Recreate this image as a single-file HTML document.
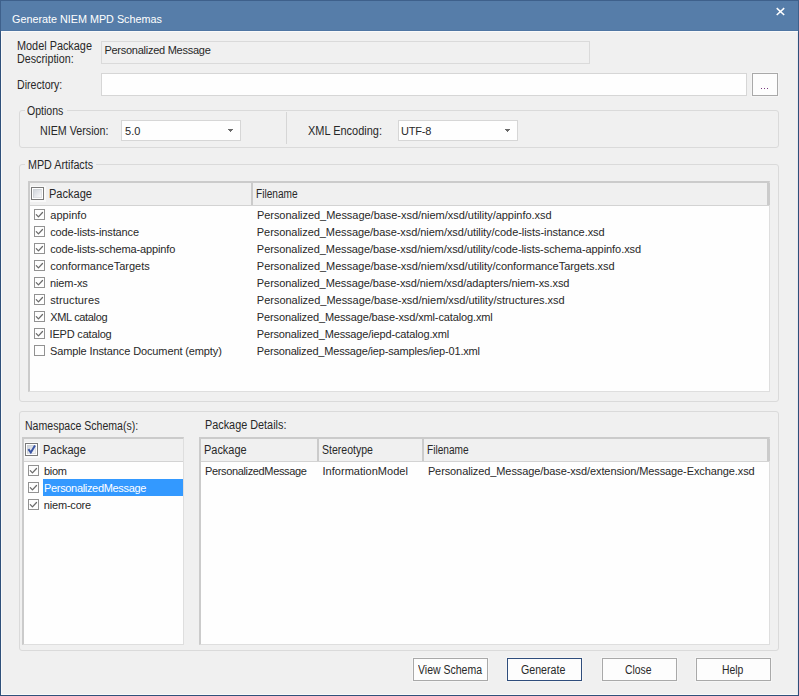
<!DOCTYPE html>
<html>
<head>
<meta charset="utf-8">
<title>Generate NIEM MPD Schemas</title>
<style>
*{box-sizing:border-box;margin:0;padding:0}
html,body{width:799px;height:696px;overflow:hidden;background:#f0f0f0}
body{font-family:"Liberation Sans",sans-serif;font-size:11px;color:#282828;position:relative}
.abs{position:absolute}
.t{position:absolute;white-space:nowrap;line-height:13px;height:13px}
.l{font-size:12px;line-height:14px;height:14px;transform-origin:0 0}
.grp{position:absolute;border:1px solid #dadada;border-radius:3px}
.grplbl{position:absolute;background:#f0f0f0;height:3px}
.inp{position:absolute;border:1px solid #d6d6d6;background:#fefefe}
.ro{background:#f0f0f0;border-color:#dadada}
.list{position:absolute;background:#fefefe;border-style:solid;border-width:2px 1px 1px 2px;border-color:#cbcbcb #dedede #dedede #cbcbcb}
.hdr{position:absolute;background:#f0f0f0;border-bottom:1px solid #d3d3d3}
.sep{position:absolute;width:2px;background:#cbcbcb}
.cb{position:absolute;width:11px;height:11px;border:1px solid #929292;background:#fefefe}
.cb svg{position:absolute;left:0;top:0}
.hcb{position:absolute;width:16px;height:16px;background:#f9f9f9}
.hcb i{position:absolute;left:1px;top:1px;width:13px;height:13px;border:1px solid #7a7a7a;background:#fff}
.hcb b{position:absolute;left:3px;top:3px;width:9px;height:9px;border:1px solid #cfd3d8;border-right-color:#dfe1e4;border-bottom-color:#dfe1e4;background:linear-gradient(135deg,#d2d6dc 0%,#e4e6ea 50%,#f8f8f9 100%)}
.hcb svg{position:absolute;left:2px;top:2px}
.btn{position:absolute;border:1px solid #a9a9a9;background:#fdfdfd;height:23px;width:75px;box-shadow:0 0 0 1px #f5f5f5}
.arrow{position:absolute;width:0;height:0;border-left:3px solid transparent;border-right:3px solid transparent;border-top:3px solid #5a5a5a}
</style>
</head>
<body>
<!-- window frame -->
<div class="abs" style="left:0;top:0;width:799px;height:31px;background:#567da9"></div>
<div class="abs" style="left:0;top:30px;width:799px;height:1px;background:#4f76a3"></div>
<div class="abs" style="left:0;top:31px;width:799px;height:1px;background:#fafafa"></div>
<div class="abs" style="left:0;top:0;width:799px;height:1px;background:#3e608b"></div>
<div class="abs" style="left:1px;top:32px;width:1px;height:663px;background:#f9f9f9"></div>
<div class="abs" style="left:1px;top:694px;width:797px;height:1px;background:#f9f9f9"></div>
<div class="abs" style="left:797px;top:32px;width:1px;height:663px;background:#e4e8ee"></div>
<div class="abs" style="left:0;top:0;width:1px;height:696px;background:linear-gradient(#3e608b 0,#3e608b 30px,#30517b 34px)"></div>
<div class="abs" style="left:798px;top:0;width:1px;height:696px;background:linear-gradient(#3e608b 0,#3e608b 30px,#2f4f79 34px)"></div>
<div class="abs" style="left:0;top:695px;width:799px;height:1px;background:#30517b"></div>
<div class="t" id="ttl" style="left:12.1px;top:12px;color:#fff;font-size:11.7px;line-height:14px;height:14px;transform-origin:0 50%;transform:scaleX(0.923)">Generate NIEM MPD Schemas</div>
<svg class="abs" style="left:775px;top:7px" width="11" height="10" viewBox="0 0 11 10"><path d="M1.7 1.1 L9.2 8.0 M9.2 1.1 L1.7 8.0" stroke="#fff" stroke-width="1.5" fill="none"/></svg>

<!-- top fields -->
<div class="inp ro" style="left:101px;top:41px;width:489px;height:23px"></div>
<div class="inp" style="left:101px;top:73px;width:646px;height:23px"></div>
<div class="btn" style="left:752px;top:73px;width:26px;height:23px"></div>
<div class="abs" style="left:761px;top:88px;width:1px;height:1px;background:#7a3a80"></div>
<div class="abs" style="left:764px;top:88px;width:1px;height:1px;background:#7a3a80"></div>
<div class="abs" style="left:767px;top:88px;width:1px;height:1px;background:#7a3a80"></div>

<!-- Options group -->
<div class="grp" style="left:19px;top:110px;width:760px;height:38px"></div>
<div class="grplbl" style="left:25px;top:109px;width:42px"></div>
<div class="inp" style="left:121px;top:120px;width:120px;height:21px"></div>
<div class="abs" style="left:228px;top:129px;width:5px;height:1px;background:#6a6a6a"></div><div class="abs" style="left:229px;top:130px;width:3px;height:1px;background:#6a6a6a"></div><div class="abs" style="left:230px;top:131px;width:1px;height:1px;background:#6a6a6a"></div>
<div class="abs" style="left:286px;top:112px;width:1px;height:32px;background:#d6d6d6"></div>
<div class="inp" style="left:398px;top:120px;width:120px;height:21px"></div>
<div class="abs" style="left:505px;top:129px;width:5px;height:1px;background:#6a6a6a"></div><div class="abs" style="left:506px;top:130px;width:3px;height:1px;background:#6a6a6a"></div><div class="abs" style="left:507px;top:131px;width:1px;height:1px;background:#6a6a6a"></div>

<!-- MPD Artifacts -->
<div class="grp" style="left:19px;top:164px;width:760px;height:238px"></div>
<div class="grplbl" style="left:25px;top:163px;width:71px"></div>
<div class="list" style="left:28px;top:181px;width:742px;height:211px"></div>
<div class="hdr" style="left:30px;top:183px;width:739px;height:23px"></div>
<div class="sep" style="left:251px;top:183px;height:22px"></div>
<div class="sep" style="left:767px;top:183px;height:22px;width:3px"></div>
<div class="hcb" style="left:30px;top:186px"><i></i><b></b></div>

<!-- lower group -->
<div class="grp" style="left:19px;top:411px;width:760px;height:240px"></div>
<div class="list" style="left:22px;top:437px;width:162px;height:208px"></div>
<div class="hdr" style="left:24px;top:439px;width:159px;height:23px"></div>
<div class="hcb" style="left:24px;top:442px"><i></i><b></b><svg width="13" height="13" viewBox="0 0 13 13"><path d="M2.4 5.2 L4.8 8.5 L9.0 1.6" stroke="#3a55a4" stroke-width="2" fill="none"/></svg></div>
<div class="abs" style="left:43px;top:479px;width:140px;height:17px;background:#3399ff"></div>
<div class="list" style="left:199px;top:437px;width:571px;height:208px"></div>
<div class="hdr" style="left:201px;top:439px;width:568px;height:23px"></div>
<div class="sep" style="left:317px;top:439px;height:22px"></div>
<div class="sep" style="left:422px;top:439px;height:22px"></div>
<div class="sep" style="left:767px;top:439px;height:22px;width:3px"></div>

<div class="cb" style="left:34px;top:209px"><svg width="9" height="9" viewBox="0 0 9 9"><path d="M1.3 4.6 L3.45 6.9 L7.5 2.5" stroke="#6a6a6a" stroke-width="1.25" fill="none" stroke-linecap="round" stroke-linejoin="round"/></svg></div>
<div class="cb" style="left:34px;top:226px"><svg width="9" height="9" viewBox="0 0 9 9"><path d="M1.3 4.6 L3.45 6.9 L7.5 2.5" stroke="#6a6a6a" stroke-width="1.25" fill="none" stroke-linecap="round" stroke-linejoin="round"/></svg></div>
<div class="cb" style="left:34px;top:243px"><svg width="9" height="9" viewBox="0 0 9 9"><path d="M1.3 4.6 L3.45 6.9 L7.5 2.5" stroke="#6a6a6a" stroke-width="1.25" fill="none" stroke-linecap="round" stroke-linejoin="round"/></svg></div>
<div class="cb" style="left:34px;top:260px"><svg width="9" height="9" viewBox="0 0 9 9"><path d="M1.3 4.6 L3.45 6.9 L7.5 2.5" stroke="#6a6a6a" stroke-width="1.25" fill="none" stroke-linecap="round" stroke-linejoin="round"/></svg></div>
<div class="cb" style="left:34px;top:277px"><svg width="9" height="9" viewBox="0 0 9 9"><path d="M1.3 4.6 L3.45 6.9 L7.5 2.5" stroke="#6a6a6a" stroke-width="1.25" fill="none" stroke-linecap="round" stroke-linejoin="round"/></svg></div>
<div class="cb" style="left:34px;top:294px"><svg width="9" height="9" viewBox="0 0 9 9"><path d="M1.3 4.6 L3.45 6.9 L7.5 2.5" stroke="#6a6a6a" stroke-width="1.25" fill="none" stroke-linecap="round" stroke-linejoin="round"/></svg></div>
<div class="cb" style="left:34px;top:311px"><svg width="9" height="9" viewBox="0 0 9 9"><path d="M1.3 4.6 L3.45 6.9 L7.5 2.5" stroke="#6a6a6a" stroke-width="1.25" fill="none" stroke-linecap="round" stroke-linejoin="round"/></svg></div>
<div class="cb" style="left:34px;top:328px"><svg width="9" height="9" viewBox="0 0 9 9"><path d="M1.3 4.6 L3.45 6.9 L7.5 2.5" stroke="#6a6a6a" stroke-width="1.25" fill="none" stroke-linecap="round" stroke-linejoin="round"/></svg></div>
<div class="cb" style="left:34px;top:345px"></div>
<div class="cb" style="left:28px;top:465px"><svg width="9" height="9" viewBox="0 0 9 9"><path d="M1.3 4.6 L3.45 6.9 L7.5 2.5" stroke="#6a6a6a" stroke-width="1.25" fill="none" stroke-linecap="round" stroke-linejoin="round"/></svg></div>
<div class="cb" style="left:28px;top:482px"><svg width="9" height="9" viewBox="0 0 9 9"><path d="M1.3 4.6 L3.45 6.9 L7.5 2.5" stroke="#6a6a6a" stroke-width="1.25" fill="none" stroke-linecap="round" stroke-linejoin="round"/></svg></div>
<div class="cb" style="left:28px;top:499px"><svg width="9" height="9" viewBox="0 0 9 9"><path d="M1.3 4.6 L3.45 6.9 L7.5 2.5" stroke="#6a6a6a" stroke-width="1.25" fill="none" stroke-linecap="round" stroke-linejoin="round"/></svg></div>

<!-- buttons -->
<div class="btn" style="left:413px;top:658px"></div>
<div class="btn" style="left:507px;top:658px;border-color:#2f4d7c"></div>
<div class="btn" style="left:602px;top:658px"></div>
<div class="btn" style="left:696px;top:658px"></div>

<div class="t l" style="left:17.19px;top:39px;transform:scaleX(0.9061)">Model Package</div>
<div class="t l" style="left:16.52px;top:52px;transform:scaleX(0.8946)">Description:</div>
<div class="t" style="left:104.41px;top:44px;letter-spacing:-0.259px">Personalized Message</div>
<div class="t l" style="left:16.50px;top:78px;transform:scaleX(0.8819)">Directory:</div>
<div class="t l" style="left:27.18px;top:104px;transform:scaleX(0.8777)">Options</div>
<div class="t l" style="left:40.08px;top:124px;transform:scaleX(0.8918)">NIEM Version:</div>
<div class="t" style="left:124.98px;top:125px;letter-spacing:0.094px">5.0</div>
<div class="t l" style="left:308.06px;top:124px;transform:scaleX(0.9143)">XML Encoding:</div>
<div class="t" style="left:401.07px;top:125px;letter-spacing:-0.244px">UTF-8</div>
<div class="t l" style="left:28.28px;top:158px;transform:scaleX(0.8956)">MPD Artifacts</div>
<div class="t l" style="left:48.56px;top:187px;transform:scaleX(0.9200)">Package</div>
<div class="t l" style="left:255.66px;top:187px;transform:scaleX(0.8427)">Filename</div>
<div class="t" style="left:50.30px;top:209px;letter-spacing:0.027px">appinfo</div>
<div class="t" style="left:256.89px;top:209px;letter-spacing:-0.031px">Personalized_Message/base-xsd/niem/xsd/utility/appinfo.xsd</div>
<div class="t" style="left:50.21px;top:226px;letter-spacing:-0.123px">code-lists-instance</div>
<div class="t" style="left:256.84px;top:226px;letter-spacing:-0.054px">Personalized_Message/base-xsd/niem/xsd/utility/code-lists-instance.xsd</div>
<div class="t" style="left:50.18px;top:243px;letter-spacing:-0.134px">code-lists-schema-appinfo</div>
<div class="t" style="left:256.86px;top:243px;letter-spacing:-0.061px">Personalized_Message/base-xsd/niem/xsd/utility/code-lists-schema-appinfo.xsd</div>
<div class="t" style="left:50.17px;top:260px;letter-spacing:-0.003px">conformanceTargets</div>
<div class="t" style="left:256.84px;top:260px;letter-spacing:-0.035px">Personalized_Message/base-xsd/niem/xsd/utility/conformanceTargets.xsd</div>
<div class="t" style="left:50.05px;top:277px;letter-spacing:-0.126px">niem-xs</div>
<div class="t" style="left:256.84px;top:277px;letter-spacing:-0.070px">Personalized_Message/base-xsd/niem/xsd/adapters/niem-xs.xsd</div>
<div class="t" style="left:50.14px;top:294px;letter-spacing:0.137px">structures</div>
<div class="t" style="left:256.87px;top:294px;letter-spacing:-0.015px">Personalized_Message/base-xsd/niem/xsd/utility/structures.xsd</div>
<div class="t" style="left:50.20px;top:311px;letter-spacing:-0.332px">XML catalog</div>
<div class="t" style="left:256.83px;top:311px;letter-spacing:-0.126px">Personalized_Message/base-xsd/xml-catalog.xml</div>
<div class="t" style="left:49.61px;top:328px;letter-spacing:-0.193px">IEPD catalog</div>
<div class="t" style="left:256.83px;top:328px;letter-spacing:-0.144px">Personalized_Message/iepd-catalog.xml</div>
<div class="t" style="left:50.02px;top:345px;letter-spacing:-0.117px">Sample Instance Document (empty)</div>
<div class="t" style="left:256.83px;top:345px;letter-spacing:-0.174px">Personalized_Message/iep-samples/iep-01.xml</div>
<div class="t l" style="left:24.62px;top:419px;transform:scaleX(0.8797)">Namespace Schema(s):</div>
<div class="t l" style="left:205.17px;top:418px;transform:scaleX(0.9042)">Package Details:</div>
<div class="t l" style="left:42.70px;top:443px;transform:scaleX(0.9152)">Package</div>
<div class="t" style="left:44.01px;top:465px;letter-spacing:-0.316px">biom</div>
<div class="t" style="left:44.04px;top:482px;letter-spacing:-0.330px;color:#fff">PersonalizedMessage</div>
<div class="t" style="left:43.84px;top:499px;letter-spacing:-0.196px">niem-core</div>
<div class="t l" style="left:203.87px;top:443px;transform:scaleX(0.9128)">Package</div>
<div class="t l" style="left:322.13px;top:443px;transform:scaleX(0.8785)">Stereotype</div>
<div class="t l" style="left:426.52px;top:443px;transform:scaleX(0.8427)">Filename</div>
<div class="t" style="left:204.91px;top:465px;letter-spacing:-0.345px">PersonalizedMessage</div>
<div class="t" style="left:322.55px;top:465px;letter-spacing:0.021px">InformationModel</div>
<div class="t" style="left:427.88px;top:465px;letter-spacing:-0.099px">Personalized_Message/base-xsd/extension/Message-Exchange.xsd</div>
<div class="t l" style="left:418.20px;top:663px;transform:scaleX(0.8750)">View Schema</div>
<div class="t l" style="left:521.18px;top:663px;transform:scaleX(0.8853)">Generate</div>
<div class="t l" style="left:625.06px;top:663px;transform:scaleX(0.8628)">Close</div>
<div class="t l" style="left:721.53px;top:663px;transform:scaleX(0.8652)">Help</div>
</body>
</html>
